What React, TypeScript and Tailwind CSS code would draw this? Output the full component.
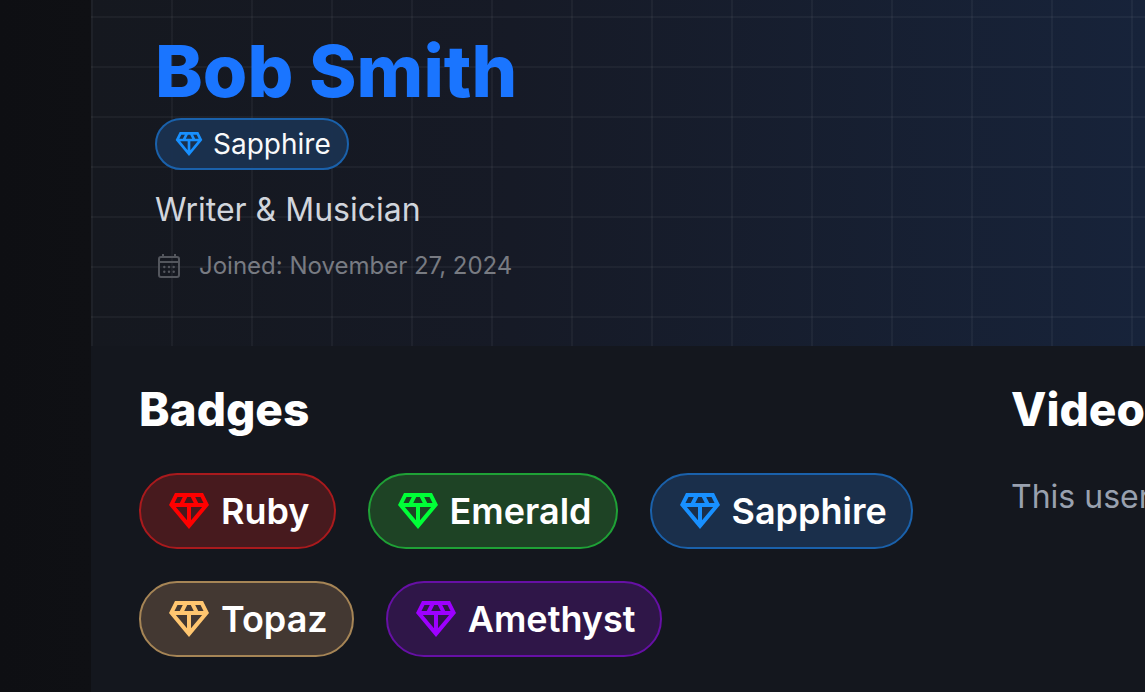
import React from "react";
import { MdOutlineDiamond } from "react-icons/md";

type Gem = { name: string; icon: string; pill: string };

const gems: Gem[] = [
  { name: "Ruby", icon: "text-[#ff0000]", pill: "border-[#a91a1d] bg-[#471a1e]" },
  { name: "Emerald", icon: "text-[#00ff37]", pill: "border-[#1fa136] bg-[#1e4325]" },
  { name: "Sapphire", icon: "text-[#1890ff]", pill: "border-[#1a61ab] bg-[#1a2f4b]" },
  { name: "Topaz", icon: "text-[#ffc670]", pill: "border-[#a68556] bg-[#433832]" },
  { name: "Amethyst", icon: "text-[#9d00ff]", pill: "border-[#6610a5] bg-[#2f1648]" },
];

function CalendarIcon() {
  return (
    <svg
      viewBox="0 0 28 28"
      className="size-7 shrink-0 text-[#53565d]"
      fill="none"
      stroke="currentColor"
      strokeWidth="2"
      aria-hidden="true"
    >
      <rect x="4" y="5" width="20" height="20" rx="2" />
      <path d="M4 10h20M8 2v3M20 2v3" />
      <g fill="currentColor" stroke="none">
        <circle cx="9.3" cy="15" r="1.2" />
        <circle cx="14" cy="15" r="1.2" />
        <circle cx="18.7" cy="15" r="1.2" />
        <circle cx="9.3" cy="19.8" r="1.2" />
        <circle cx="14" cy="19.8" r="1.2" />
        <circle cx="18.7" cy="19.8" r="1.2" />
      </g>
    </svg>
  );
}

export default function App() {
  return (
    <div className="flex h-screen overflow-hidden bg-[#14171e] font-['Inter',sans-serif]">
      <aside className="w-[91px] shrink-0 bg-linear-to-r from-[#0e0f13] to-[#0f1014]" />
      <main className="flex min-w-0 flex-1 flex-col">
        <header className="bg-[linear-gradient(to_right,#ffffff0a_2px,transparent_2px),linear-gradient(to_bottom,#ffffff0a_2px,transparent_2px),linear-gradient(to_right,#15181f,#161a26_40%,#17233a)] bg-[length:80px_50px,80px_50px,100%_100%] bg-[position:0_0,0_16px,0_0] px-16 pt-8 pb-16">
          <h1 className="text-[72px] leading-[78px] font-extrabold text-[#1a75ff]">Bob Smith</h1>
          <div className="mt-2 flex">
            <span className="flex items-center gap-2 rounded-full border-2 border-[#1a61ab] bg-[#1a3150]/95 px-4 py-2 text-[28px] leading-8 text-gray-50">
              <MdOutlineDiamond className="size-8 text-[#1890ff]" aria-hidden="true" />
              Sapphire
            </span>
          </div>
          <p className="mt-5 text-[32px] leading-10 text-gray-300">Writer &amp; Musician</p>
          <p className="mt-5 flex items-center gap-4 text-[24px] leading-8 text-[#787b82]">
            <CalendarIcon />
            Joined: November 27, 2024
          </p>
        </header>
        <div className="flex gap-12 px-12 pt-[39px]">
          <section className="w-[824px] shrink-0">
            <h2 className="text-[46px] leading-12 font-extrabold text-white">Badges</h2>
            <ul className="mt-10 flex flex-wrap gap-8">
              {gems.map((gem) => (
                <li
                  key={gem.name}
                  className={`flex items-center gap-2 rounded-full border-2 px-6 py-3 text-[36px] leading-12 font-semibold text-white ${gem.pill}`}
                >
                  <MdOutlineDiamond className={`size-12 ${gem.icon}`} aria-hidden="true" />
                  {gem.name}
                </li>
              ))}
            </ul>
          </section>
          <section className="shrink-0">
            <h2 className="text-[46px] leading-12 font-extrabold text-white">Video</h2>
            <p className="mt-10 text-[32px] leading-12 text-gray-400">This user</p>
          </section>
        </div>
      </main>
    </div>
  );
}
